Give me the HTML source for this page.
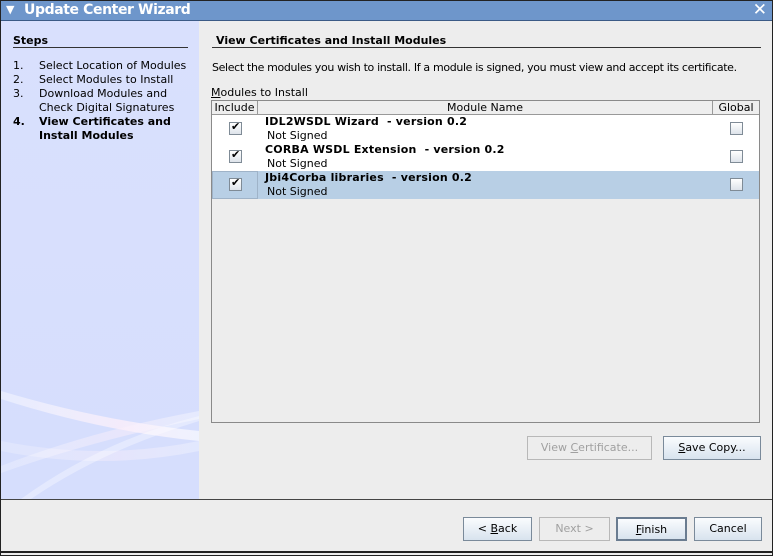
<!DOCTYPE html>
<html><head><meta charset="utf-8"><style>
*{margin:0;padding:0;box-sizing:border-box}
body{width:773px;height:556px;background:#ededed;font-family:"DejaVu Sans","Liberation Sans",sans-serif;font-size:11px;color:#000;position:relative;overflow:hidden}
.abs{position:absolute}
.title{left:0;top:0;width:773px;height:21px;background:#6e96cb;border-bottom:1px solid #3b5a86;color:#fff;font-size:14px;font-weight:bold;line-height:20px}
.frame{left:0;top:0;width:773px;height:556px;border:1px solid #222;pointer-events:none}
.left{left:1px;top:21px;width:198px;height:478px;background:linear-gradient(#d9e0fd,#d6defd)}
.btn{position:absolute;height:24px;border:1px solid #7a8a9a;background:linear-gradient(#fafcfe,#d8e3ee);text-align:center;line-height:22px;font-size:11px}
.dis{border-color:#b8b8b8;background:#ededed;color:#a0a0a0}
.cb{position:absolute;width:13px;height:13px;border:1px solid #7f8b96;background:linear-gradient(#fff,#dde3ea)}
.row{position:absolute;left:212px;width:547px;height:28px}
.row b{position:absolute;left:53px;top:0;font-size:11px;letter-spacing:.2px}
.row span{position:absolute;left:55px;top:14px;font-size:11px}
u{text-decoration:underline}
</style></head><body>
<div class="abs title"><span style="position:absolute;left:6px;top:0;font-size:11px">▼</span><span style="position:absolute;left:24px;letter-spacing:-.4px">Update Center Wizard</span><span style="position:absolute;right:6px;top:0;font-size:17px">✕</span></div>
<div class="abs left">
<svg width="198" height="478" style="position:absolute;left:0;top:0">
<defs><linearGradient id="g" x1="0" x2="1"><stop offset="0" stop-color="#fff" stop-opacity=".4"/><stop offset=".6" stop-color="#fbeefa" stop-opacity=".8"/><stop offset="1" stop-color="#fff" stop-opacity=".6"/></linearGradient></defs>
<path d="M0 370 Q100 400 198 410 L198 420 Q100 410 0 378Z" fill="url(#g)"/>
<path d="M0 445 Q90 410 198 390 L198 398 Q90 420 0 452Z" fill="url(#g)" opacity=".6"/>
<path d="M0 420 Q100 440 198 420 L198 430 Q100 450 0 430Z" fill="url(#g)" opacity=".5"/>
<path d="M20 478 Q100 420 198 395 L198 400 Q100 430 30 478Z" fill="#fff" opacity=".35"/>
</svg>
<div style="position:absolute;left:12px;top:13px;font-weight:bold">Steps</div>
<div style="position:absolute;left:12px;top:26px;width:175px;border-top:1px solid #333"></div>
<div style="position:absolute;left:12px;top:38px;line-height:14px">
<div>1.<span style="position:absolute;left:26px;white-space:nowrap">Select Location of Modules</span></div>
<div>2.<span style="position:absolute;left:26px;white-space:nowrap">Select Modules to Install</span></div>
<div>3.<span style="position:absolute;left:26px;white-space:nowrap">Download Modules and<br>Check Digital Signatures</span></div>
<div style="margin-top:14px;font-weight:bold">4.<span style="position:absolute;left:26px;white-space:nowrap">View Certificates and<br>Install Modules</span></div>
</div></div>
<div class="abs" style="left:0;top:499px;width:773px;border-top:1px solid #444"></div>
<div class="abs" style="left:216px;top:34px;font-weight:bold">View Certificates and Install Modules</div>
<div class="abs" style="left:212px;top:47px;width:549px;border-top:1px solid #333"></div>
<div class="abs" style="left:212px;top:61px;white-space:nowrap;letter-spacing:-.35px">Select the modules you wish to install. If a module is signed, you must view and accept its certificate.</div>
<div class="abs" style="left:211px;top:86px"><u>M</u>odules to Install</div>
<div class="abs" style="left:211px;top:100px;width:549px;height:323px;border:1px solid #8a8a8a;background:#ededed"></div>
<div class="abs" style="left:212px;top:101px;width:547px;height:14px;background:#eee;border-bottom:1px solid #999;line-height:13px">
<div style="position:absolute;left:0;width:46px;text-align:center;border-right:1px solid #999;height:14px">Include</div>
<div style="position:absolute;left:46px;width:455px;text-align:center;border-right:1px solid #999;height:14px">Module Name</div>
<div style="position:absolute;left:501px;width:46px;text-align:center;height:14px">Global</div></div>
<div class="row" style="top:115px;background:#fff"><b>IDL2WSDL Wizard &nbsp;- version 0.2</b><span>Not Signed</span></div>
<div class="row" style="top:143px;background:#fff"><b>CORBA WSDL Extension &nbsp;- version 0.2</b><span>Not Signed</span></div>
<div class="row" style="top:171px;background:#b8cfe5"><b>Jbi4Corba libraries &nbsp;- version 0.2</b><span>Not Signed</span></div>
<div class="abs" style="left:212px;top:171px;width:46px;height:28px;border:1px solid #9fb3c8"></div>
<div class="cb" style="left:229px;top:122px"></div><div class="abs" style="left:231px;top:120px;font-size:11px;font-weight:bold">✔</div>
<div class="cb" style="left:229px;top:150px"></div><div class="abs" style="left:231px;top:148px;font-size:11px;font-weight:bold">✔</div>
<div class="cb" style="left:229px;top:178px"></div><div class="abs" style="left:231px;top:176px;font-size:11px;font-weight:bold">✔</div>
<div class="cb" style="left:730px;top:122px"></div>
<div class="cb" style="left:730px;top:150px"></div>
<div class="cb" style="left:730px;top:178px"></div>
<div class="btn dis" style="left:527px;top:436px;width:125px">View <u>C</u>ertificate...</div>
<div class="btn" style="left:663px;top:436px;width:98px"><u>S</u>ave Copy...</div>
<div class="btn" style="left:463px;top:517px;width:69px">&lt; <u>B</u>ack</div>
<div class="btn dis" style="left:539px;top:517px;width:71px">Next &gt;</div>
<div class="btn" style="left:616px;top:517px;width:71px;border:2px solid #6a7c90"><u>F</u>inish</div>
<div class="btn" style="left:694px;top:517px;width:68px">Cancel</div>
<div class="abs" style="left:0;top:551px;width:773px;border-top:2px solid #222"></div>
<div class="abs frame"></div>
</body></html>
